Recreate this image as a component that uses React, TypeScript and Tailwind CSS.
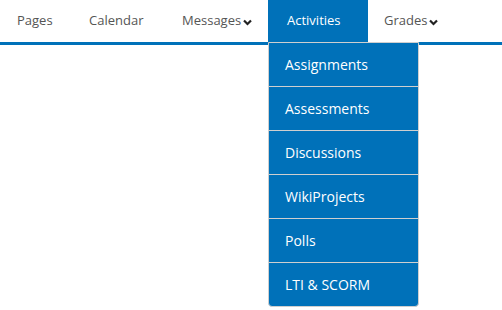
import React from "react";

const Chevron = () => (
  <svg width="9" height="7" viewBox="0 0 9 7" className="ml-[2px] mt-[3px]">
    <path d="M1 1.5 L4.5 5 L8 1.5" fill="none" stroke="#222" strokeWidth="2.2" />
  </svg>
);

export default function App() {
  const items = ["Assignments", "Assessments", "Discussions", "WikiProjects", "Polls", "LTI & SCORM"];
  return (
    <div className="w-[502px] h-[310px] bg-white relative" style={{ fontFamily: '"Open Sans", sans-serif' }}>
      <div className="flex h-[42px] border-b-[3px] border-[#0071b9] box-content">
        <div className="flex items-center w-[71px] pl-[17px] text-[13px] text-[#555]">Pages</div>
        <div className="flex items-center w-[93px] pl-[18px] text-[13px] text-[#555]">Calendar</div>
        <div className="flex items-center w-[104px] pl-[18px] text-[13px] text-[#555]">Messages<Chevron /></div>
        <div className="relative flex items-center w-[100px] pl-[19px] text-[13px] text-white bg-[#0071b9]">
          Activities
          <div className="absolute left-0 top-[42px] w-[151px] border border-[#cfcfcf] rounded-b-[4px] bg-[#0071b9] flex flex-col z-10 overflow-hidden">
            {items.map((t, i) => (
              <div key={t} className={"flex items-center pl-[16px] text-[14px] text-white " + (i < items.length - 1 ? "border-b border-[#cfcfcf] h-[44px]" : "h-[43px]")}>
                {t}
              </div>
            ))}
          </div>
        </div>
        <div className="flex items-center pl-[16px] text-[13px] text-[#555]">Grades<Chevron /></div>
      </div>
    </div>
  );
}
